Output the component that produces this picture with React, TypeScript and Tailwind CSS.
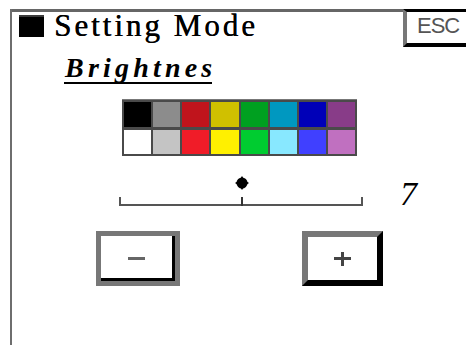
import React from "react";

const row1 = ["#000000", "#8c8c8c", "#c0141c", "#d0c000", "#00a020", "#0098c0", "#0000b8", "#883c88"];
const row2 = ["#ffffff", "#c4c4c4", "#f01c28", "#fff000", "#00cc30", "#88e8ff", "#4040ff", "#c070c0"];

export default function App() {
  return (
    <div className="w-[466px] h-[345px] bg-white overflow-hidden pt-[9px] pl-[10px]">
      <div className="h-[400px] border-l-2 border-[#6e6e6e] flex flex-col">
        {/* header */}
        <div className="flex h-[38px]">
          <div className="flex-1 border-t-[3px] border-[#666666] flex items-start pl-[7px]">
            <div className="w-[25px] h-[22px] bg-black mt-[3px] border-t-2 border-[#3a3a3a]" />
            <span
              className="ml-[10px] text-[31px] leading-[27px] tracking-[3px] text-black whitespace-nowrap [text-shadow:0.4px_0_0_#000]"
              style={{ fontFamily: '"Liberation Serif", "Times New Roman", serif' }}
            >
              Setting Mode
            </span>
          </div>
          <div className="w-[63px] h-[38px] border-t-[3px] border-b-4 border-black border-l-4 border-l-[#777777] pl-[10px] pt-[3px]">
            <span
              className="block text-[22px] leading-[22px] tracking-[-1px] text-[#555555]"
              style={{ fontFamily: '"Liberation Sans", Arial, sans-serif' }}
            >
              ESC
            </span>
          </div>
        </div>

        {/* Brightnes */}
        <div className="mt-[7px] ml-[52px]">
          <div
            className="w-[148px] h-[30px] border-b-2 border-black pl-[1px] text-[28px] leading-[28px] font-bold italic tracking-[4.2px] text-black whitespace-nowrap"
            style={{ fontFamily: '"Liberation Serif", "Times New Roman", serif' }}
          >
            Brightnes
          </div>
        </div>

        {/* palette */}
        <div className="mt-[15px] ml-[110px] w-[235px] bg-[#4a4a4a] border-t border-[#777777] pt-[2px] px-[2px] pb-[2px] flex flex-col gap-[3px]">
          <div className="flex gap-[2px]">
            {row1.map((c) => (
              <div key={c} className="w-[27.4px] h-[25px]" style={{ backgroundColor: c }} />
            ))}
          </div>
          <div className="flex gap-[2px]">
            {row2.map((c) => (
              <div key={c} className="w-[27.4px] h-[24px]" style={{ backgroundColor: c }} />
            ))}
          </div>
        </div>

        {/* slider */}
        <div className="mt-[18px] flex items-start h-[34px]">
          <svg className="ml-[103px]" width="252" height="34" viewBox="0 0 252 34">
            <rect x="4" y="30" width="244" height="2" fill="#555555" />
            <rect x="4" y="23" width="2" height="9" fill="#555555" />
            <rect x="246" y="23" width="2" height="9" fill="#555555" />
            <rect x="126" y="23" width="2" height="9" fill="#333333" />
            <circle cx="127" cy="9" r="5.5" fill="#000000" />
            <polygon points="127,2 129,5 125,5" fill="#000000" />
            <polygon points="127,16 129,13 125,13" fill="#000000" />
            <polygon points="120,9 123,7 123,11" fill="#000000" />
            <polygon points="134,9 131,7 131,11" fill="#000000" />
          </svg>
          <span
            className="ml-[33px] mt-[3px] text-[34px] leading-[34px] italic text-black"
            style={{ fontFamily: '"Liberation Serif", "Times New Roman", serif' }}
          >
            7
          </span>
        </div>

        {/* buttons */}
        <div className="mt-[23px] flex items-start">
          <div className="ml-[84px] w-[84px] h-[55px] border-[5px] border-[#777777] shadow-[inset_-3px_-3px_0_#000000] flex items-center justify-center">
            <div className="w-[17px] h-[3px] bg-[#666666] mr-[3px]" />
          </div>
          <div className="ml-[122px] w-[81px] h-[55px] border-[6px] border-t-[#777777] border-l-[#777777] border-r-black border-b-black flex items-center justify-center">
            <div className="relative w-[17px] h-[14px]">
              <div className="absolute left-0 top-[5.5px] w-[17px] h-[3px] bg-[#444444]" />
              <div className="absolute left-[7px] top-0 w-[3px] h-[14px] bg-[#444444]" />
            </div>
          </div>
        </div>
      </div>
    </div>
  );
}
